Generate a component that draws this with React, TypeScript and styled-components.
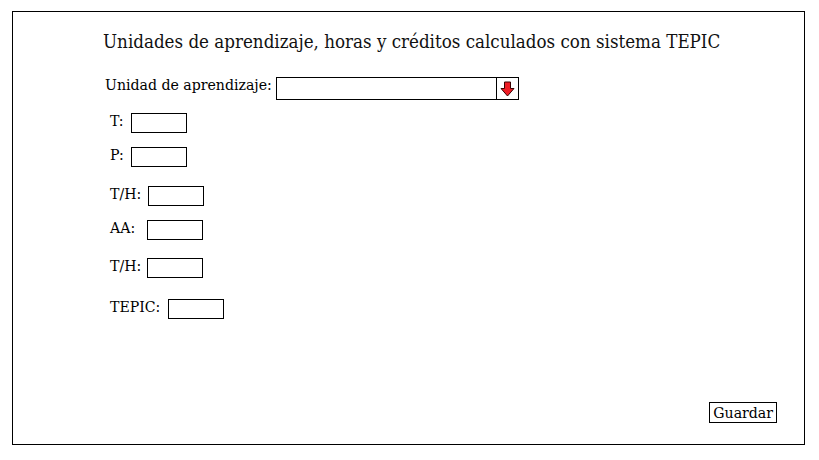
import React from "react";
import styled, { createGlobalStyle } from "styled-components";

const Global = createGlobalStyle`
  html, body { margin: 0; padding: 0; background: #fff; }
  body { font-family: "DejaVu Serif Condensed", "DejaVu Serif", serif; font-stretch: condensed; color: #000; }
`;

const Frame = styled.div`
  box-sizing: border-box;
  margin: 11px 0 0 12px;
  width: 793px;
  height: 434px;
  border: 1px solid #000;
  display: flex;
  flex-direction: column;
  padding: 18px 0 0 90px;
`;

const Title = styled.h1`
  margin: 0;
  font-weight: normal;
  font-size: 18.6px;
  line-height: 24px;
  color: #111;
`;

const Label = styled.span`
  font-size: 15.7px;
  line-height: 15px;
  white-space: pre;
`;

const SelectRow = styled.div`
  display: flex;
  align-items: flex-start;
  margin-top: 23px;
  padding-left: 2px;
`;

const SelectBox = styled.div`
  box-sizing: border-box;
  margin-left: 4px;
  width: 243px;
  height: 23px;
  border: 1px solid #000;
  display: flex;
  justify-content: flex-end;
`;

const ArrowCell = styled.div`
  width: 21px;
  border-left: 1px solid #000;
  display: flex;
  align-items: center;
  justify-content: center;
`;

const Field = styled.div<{ $top: number; $gap: number }>`
  display: flex;
  align-items: flex-start;
  margin-top: ${(p) => p.$top}px;
  padding-left: 7px;
  gap: ${(p) => p.$gap}px;
`;

const Input = styled.div`
  box-sizing: border-box;
  width: 56px;
  height: 20px;
  border: 1px solid #000;
`;

const Footer = styled.div`
  margin-top: auto;
  margin-bottom: 21px;
  display: flex;
  justify-content: flex-end;
  padding-right: 27px;
`;

const Button = styled.div`
  box-sizing: border-box;
  border: 1px solid #000;
  height: 21px;
  padding: 0 3px;
  font-size: 15.7px;
  line-height: 19px;
`;

const Arrow = () => (
  <svg width="15" height="16" viewBox="0 0 15 16">
    <path d="M4.5 1 H10.5 V7.5 H14 L7.5 15 L1 7.5 H4.5 Z" fill="#ee1c24" stroke="#3a0000" strokeWidth="1" />
  </svg>
);

const fields = [
  { label: "T:", top: 13, gap: 7 },
  { label: "P:", top: 14, gap: 7 },
  { label: "T/H:", top: 19, gap: 7 },
  { label: "AA:", top: 14, gap: 12 },
  { label: "T/H:", top: 18, gap: 6 },
  { label: "TEPIC:", top: 21, gap: 8 },
];

export default function App() {
  return (
    <>
      <Global />
      <Frame>
        <Title>Unidades de aprendizaje, horas y créditos calculados con sistema TEPIC</Title>
        <SelectRow>
          <Label>Unidad de aprendizaje:</Label>
          <SelectBox>
            <ArrowCell>
              <Arrow />
            </ArrowCell>
          </SelectBox>
        </SelectRow>
        {fields.map((f, i) => (
          <Field key={i} $top={f.top} $gap={f.gap}>
            <Label>{f.label}</Label>
            <Input />
          </Field>
        ))}
        <Footer>
          <Button>Guardar</Button>
        </Footer>
      </Frame>
    </>
  );
}
